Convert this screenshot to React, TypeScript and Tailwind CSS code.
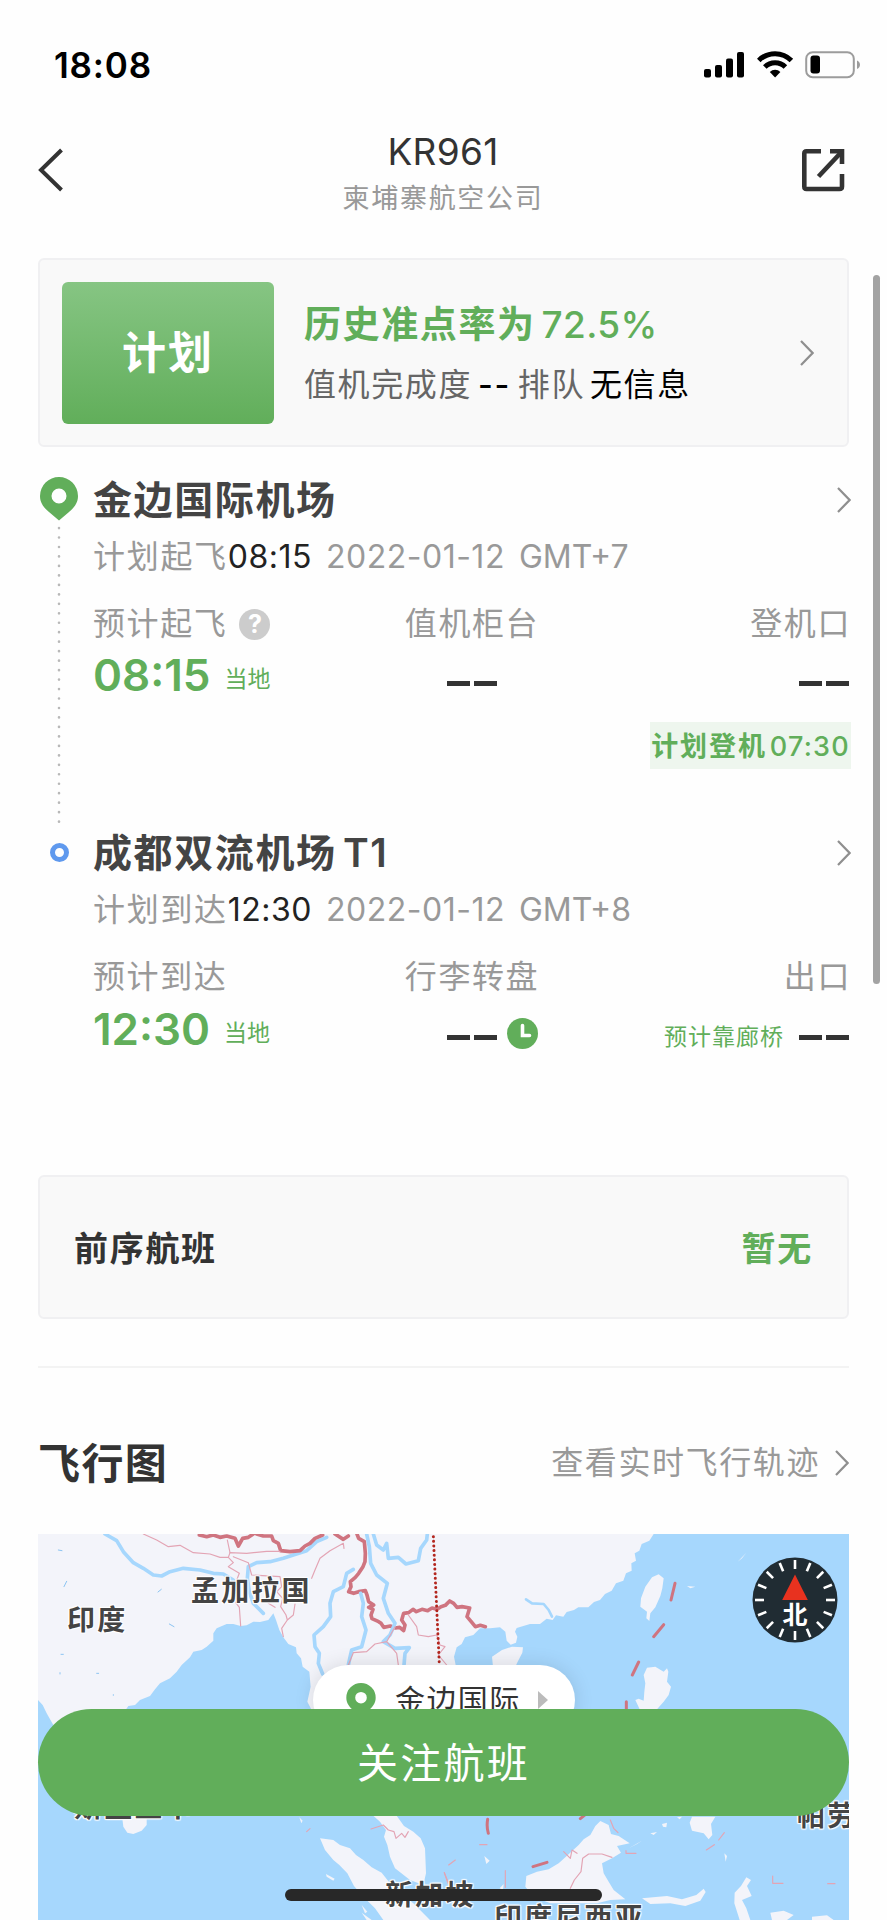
import React from 'react';

interface StopColumn {
  label: string;
  note?: string;
  clock?: boolean;
}

interface Stop {
  name: string;
  planLabel: string;
  planTime: string;
  planDate: string;
  zone: string;
  estimateLabel: string;
  estimateTime: string;
  help?: boolean;
  middle: StopColumn;
  right: StopColumn;
}

const departure: Stop = {
  name: '金边国际机场',
  planLabel: '计划起飞',
  planTime: '08:15',
  planDate: '2022-01-12',
  zone: 'GMT+7',
  estimateLabel: '预计起飞',
  estimateTime: '08:15',
  help: true,
  middle: { label: '值机柜台' },
  right: { label: '登机口' },
};

const arrival: Stop = {
  name: '成都双流机场 T1',
  planLabel: '计划到达',
  planTime: '12:30',
  planDate: '2022-01-12',
  zone: 'GMT+8',
  estimateLabel: '预计到达',
  estimateTime: '12:30',
  middle: { label: '行李转盘', clock: true },
  right: { label: '出口', note: '预计靠廊桥' },
};

const Chevron = ({ className = '' }: { className?: string }) => (
  <svg viewBox="0 0 14 26" className={`h-[26px] w-[14px] shrink-0 ${className}`} fill="none" stroke="#8f8f8f" strokeWidth="2.2">
    <path d="M1 1 L12.6 13 L1 25" />
  </svg>
);

const PinIcon = ({ className = '' }: { className?: string }) => (
  <svg viewBox="0 0 38 44" className={className}>
    <path fillRule="evenodd" fill="#61ae5a" d="M19 0a19 19 0 0 1 19 19c0 7-4 12-9 16l-10 8.500-10-8.500C4 31 0 26 0 19A19 19 0 0 1 19 0Zm0 11.500a7.500 7.500 0 1 0 0 15 7.500 7.500 0 0 0 0-15Z" />
  </svg>
);

const Dashes = () => (
  <span className="flex shrink-0 gap-1">
    <i className="h-[5px] w-[23px] bg-[#333]" />
    <i className="h-[5px] w-[23px] bg-[#333]" />
  </span>
);

function StatusBar() {
  return (
    <div className="flex h-[130px] items-center justify-between pr-[26px] pl-[54px] text-black">
      <span className="text-[35px] leading-none font-semibold tracking-[0.8px]">18:08</span>
      <svg viewBox="0 0 158 28" className="h-7 w-[158px]">
        <g>
          <rect x="1" y="18" width="7" height="8.500" rx="2" />
          <rect x="12" y="14" width="7" height="12.500" rx="2" />
          <rect x="23" y="7.500" width="7" height="19" rx="2" />
          <rect x="34" y="1" width="7" height="25.500" rx="2" />
        </g>
        <g fill="none" stroke="#000" strokeWidth="5">
          <path d="M55.800 9.400a23 23 0 0 1 32.600 0" />
          <path d="M61.800 16a14.500 14.500 0 0 1 20.600 0" />
        </g>
        <path d="M66.800 21a7.600 7.600 0 0 1 10.600 0L72.100 26.500Z" />
        <rect x="103.200" y="1.200" width="47.600" height="25" rx="6.500" fill="none" stroke="#9c9c9c" strokeWidth="2" />
        <rect x="107.500" y="4.500" width="9.500" height="18" rx="3" />
        <path d="M154 9.500c4 1.500 4 7 0 8.500Z" fill="#9c9c9c" />
      </svg>
    </div>
  );
}

function Header() {
  return (
    <header className="flex h-[128px] justify-between px-[38px]">
      <svg viewBox="0 0 26 44" className="mt-[18px] h-11 w-[26px]" fill="none" stroke="#333" strokeWidth="4">
        <path d="M23.500 2 L3 22 L23.500 42" />
      </svg>
      <div className="flex flex-col items-center pt-[3px] pl-[21px]">
        <h1 className="text-[37px] leading-[38px] tracking-[0.3px] text-[#333]">KR961</h1>
        <p className="mt-[13px] text-[27px] leading-[30px] tracking-[1.7px] text-[#999]">柬埔寨航空公司</p>
      </div>
      <svg viewBox="0 0 44 44" className="mt-[18px] mr-[4px] h-11 w-11" fill="none" stroke="#333" strokeWidth="4.6">
        <path d="M20 3.300H5.500Q3.300 3.300 3.300 5.500V38.500Q3.300 41 5.500 41H38.500Q41 41 41 38.500V26" />
        <path d="M29 3.300H41V16" />
        <path d="M17.500 28.500 L40 4.500" />
      </svg>
    </header>
  );
}

function SummaryCard() {
  return (
    <section className="flex h-[189px] items-center rounded-md border-2 border-[#f0f0f2] bg-[#f9f9f9] pr-[33px] pl-[22px]">
      <div className="flex h-[142px] w-[212px] items-center justify-center rounded-md bg-linear-to-b from-[#86c583] to-[#61ae5a] text-[44px] font-semibold tracking-[2px] text-white">
        计划
      </div>
      <div className="ml-[30px] flex-1 pt-[3px]">
        <p className="flex h-[50px] items-center gap-[6px] text-[37px] font-semibold text-[#61ae5a]">
          <span className="tracking-[1.6px]">历史准点率为</span>
          <span className="font-medium tracking-[0.3px]">72.5%</span>
        </p>
        <p className="mt-[12px] flex h-[46px] items-center text-[32px] tracking-[1.6px] text-[#666]">
          值机完成度
          <span className="ml-[6px] font-medium text-black">--</span>
          <span className="ml-[7px]">排队</span>
          <span className="ml-[5px] text-black">无信息</span>
        </p>
      </div>
      <Chevron />
    </section>
  );
}

function StopInfo({ stop }: { stop: Stop }) {
  return (
    <div className="flex-1 pt-px">
      <div className="flex h-[50px] items-center justify-between">
        <h2 className="text-[39px] font-semibold tracking-[1.6px] text-[#444] [word-spacing:-5px]">{stop.name}</h2>
        <Chevron className="-mr-[2px]" />
      </div>
      <p className="mt-[9px] flex h-[46px] items-center text-[32px] text-[#999]">
        <span className="tracking-[1.7px]">{stop.planLabel}</span>
        <span className="tracking-[0.5px] text-[#222]">{stop.planTime}</span>
        <span className="ml-[14px] tracking-[0.5px]">{stop.planDate}</span>
        <span className="ml-[14px]">{stop.zone}</span>
      </p>
      <div className="mt-5 grid h-[46px] grid-cols-3 items-center text-[32px] tracking-[1.6px] text-[#999]">
        <span className="flex items-center gap-[12px]">
          {stop.estimateLabel}
          {stop.help && (
            <i className="flex size-[31px] items-center justify-center rounded-full bg-[#ccc] text-[25px] leading-none font-bold tracking-normal text-white not-italic">?</i>
          )}
        </span>
        <span className="pl-[2px] text-center">{stop.middle.label}</span>
        <span className="-mr-[2px] text-right">{stop.right.label}</span>
      </div>
      <div className="mt-[4px] grid h-[50px] grid-cols-3 text-[#61ae5a]">
        <div className="flex items-center gap-[14px]">
          <span className="text-[44px] leading-[50px] font-semibold">{stop.estimateTime}</span>
          <span className="pt-[9px] text-[23px]">当地</span>
        </div>
        <div className="flex items-center justify-start gap-[10px] pt-[17px] pl-[102px]">
          <Dashes />
          {stop.middle.clock && (
            <svg viewBox="0 0 31 31" className="-mt-[8px] size-[31px]">
              <circle cx="15.500" cy="15.500" r="15.500" fill="#61ae5a" />
              <path d="M15.500 7.500V17.500H22.500" fill="none" stroke="#fff" strokeWidth="3.600" strokeLinecap="round" />
            </svg>
          )}
        </div>
        <div className="flex items-center justify-end gap-[15px] pt-[17px]">
          {stop.right.note && <span className="text-[23px] tracking-[1px] whitespace-nowrap">{stop.right.note}</span>}
          <Dashes />
        </div>
      </div>
    </div>
  );
}

const TICKS = Array.from({ length: 16 }, (_, i) => i * 22.5);

function Compass() {
  return (
    <div className="absolute top-[23px] left-[714px] size-[86px]">
      <svg viewBox="-43 -43 86 86" className="size-full">
        <circle r="42.500" fill="#202c33" />
        {TICKS.map((a) => (
          <path key={a} d="M0 -40V-31" stroke="#fff" strokeWidth="2.600" transform={`rotate(${a})`} />
        ))}
        <path d="M0 -25.500L12.800 0H-12.800Z" fill="#e8321f" />
      </svg>
      <span className="absolute inset-x-0 top-[44px] text-center text-[25px] leading-[28px] font-semibold text-white">北</span>
    </div>
  );
}

function MapDrawing() {
  return (
    <svg viewBox="114 42 2433 1158" className="h-[386px] w-[811px]" fill="none" strokeLinejoin="round" strokeLinecap="round">
      <rect x="114" y="42" width="2433" height="1158" fill="#a6d7fd" />
      {/* mainland */}
      <path
        fill="#f3f4fa"
        d="M114 42H1961L1948 62 1925 72 1918 92 1904 100 1908 122 1894 130 1895 152 1878 160 1870 182 1848 190 1835 212 1815 222 1800 240 1782 246 1765 262 1735 262 1722 270 1700 276 1690 290 1668 286 1658 300 1640 296 1620 312 1590 312 1550 324 1545 335 1552 350 1548 368 1532 374 1520 362 1516 335 1500 322 1470 325 1440 325 1420 345 1395 352 1385 372 1370 382 1362 410 1370 450 1420 600 1370 700 1200 700 1190 887 1212 918 1240 935 1262 955 1275 985 1278 1060 1270 1095 1230 1080 1185 1045 1170 1010 1162 975 1152 950 1158 930 1140 905 1120 887 1080 780 960 700 940 580 922 545 932 500 928 455 908 440 903 415 890 400 888 382 865 372 850 352 838 330 828 300 820 280 805 300 780 306 760 305 740 316 722 318 700 312 680 312 650 325 640 340 640 362 620 380 605 390 580 395 570 412 545 435 530 455 510 475 480 490 465 508 450 528 420 540 405 555 385 558 370 580 300 700 230 780 160 615 140 580 128 555 114 540Z"
      />
      <path fill="#f3f4fa" d="M365 880H440L440 915 425 932 400 942 382 938 370 920Z" />
      <path fill="#f3f4fa" d="M960 955L1000 960 1020 975 1050 985 1068 1005 1090 1020 1115 1042 1145 1058 1170 1090 1200 1120 1240 1150 1290 1200H1150L1125 1165 1090 1130 1062 1098 1042 1060 1018 1035 1000 1020 975 990Z" />
      <path fill="#f3f4fa" d="M978 1062L1004 1076 1000 1082 980 1070ZM1050 1112L1068 1135 1060 1142ZM1085 1155L1102 1175 1095 1180ZM898 892L908 902 904 910ZM1085 1178L1115 1200H1100Z" />
      {/* eastern half */}
      <g transform="translate(1311 0)">
        <g fill="#f3f4fa">
          <path d="M665 163L680 175 676 205 670 228 655 262 640 280 637 303 628 295 630 275 610 260 612 235 625 200 645 172Z" />
          <path d="M225 380L258 382 256 398 242 425 235 440H168L165 410 195 390Z" />
          <path d="M630 443L655 440 680 455 690 445 694 455 690 485 702 500 695 525 680 545 660 568H608L595 540 605 536 620 542 622 515 625 490 620 465Z" />
          <path d="M490 903L515 915 522 942 545 948 578 970 540 978 552 998 525 1015 495 1030 500 1060 515 1085 530 1110 565 1138 520 1140 480 1150H340L290 1130 265 1100 268 1068 300 1055 335 1048 365 1030 385 1012 425 975 440 958 460 945 475 918Z" />
          <path d="M765 890H835L822 912 826 945 815 958 800 940 765 932 758 908Z" />
          <path d="M615 1135L690 1128 735 1138 778 1125 800 1106 806 1116 790 1142 745 1158 700 1150 640 1152Z" />
          <path d="M928 1072L942 1080 930 1098 944 1128 915 1140 928 1165 940 1200H908L892 1150 893 1118 912 1098Z" />
          <path d="M1000 1178L1040 1172 1070 1185 1050 1200H1005ZM1125 1190L1170 1186 1190 1200H1125ZM862 1000L870 1008 866 1025ZM640 940L660 936 650 945ZM675 912L690 908 688 922 678 920ZM142 1008L158 1022 148 1032ZM902 125L928 98 915 115ZM575 985L615 962 600 972ZM188 1105L200 1092 198 1110ZM750 198L775 200 760 205ZM945 55L955 45ZM812 1030L822 1038ZM720 892L735 890 728 898Z" />
        </g>
        {/* borders and maritime boundary dashes */}
        <g stroke="#cf7480">
          <path d="M714 190L702 240M680 314L650 350M605 426L586 465M568 545V580M152 898Q148 920 154 940M288 1040L330 1027M430 896L445 884" strokeWidth="9" />
          <path d="M145 320L130 316 115 320 102 304 90 290 98 264 75 260 60 262 50 250 38 243 25 256 12 260 0 268-15 264-28 272-45 268-62 275-72 268-85 278-100 280-106 300-96 315-100 332-112 322-125 324-140 318-160 322-168 310-175 305-195 296-198 285-192 268-205 262-190 255-205 245-210 225-215 212-235 215-250 220-265 215-258 200-260 185-245 172-235 160-222 140-216 125-215 100-218 65-235 55-240 42" strokeWidth="11" />
        </g>
        <g stroke="#e3a4b4" strokeWidth="3.500">
          <path d="M400 1105L412 1080 432 1055 437 1015 455 1002 495 1002 525 1012M380 995L400 1015 405 990 420 1000M520 900L530 925 543 938M567 992V1000H597M808 990L832 974M845 960L862 938M1007 1068V1090H1038M1172 1091H1194M205 1052V1102M128 974H150M35 1035L55 1020M22 1058L34 1088" />
        </g>
        <path d="M267 238L285 250 320 252 335 270 345 290" stroke="#a6d7fd" strokeWidth="8" />
      </g>
      <g stroke="#a6d7fd" strokeWidth="11">
        <path d="M315 42L350 62 370 95 400 128 430 145 460 165 485 168 510 155 550 145 600 150 640 160 670 162 700 180" />
        <path d="M980 52L950 65 920 92 880 105 850 115 810 125 770 128 745 140 742 175 748 215 760 250 790 280" />
        <path d="M1060 148L1040 160 1030 200 1000 215 990 250 992 290 970 320 942 345 945 380 958 400 955 430 968 462" />
        <path d="M1082 220L1090 250 1085 290 1098 330 1085 380 1055 390 1045 435" />
        <path d="M1100 42L1108 80 1112 130 1130 165 1162 190 1150 235 1165 280 1185 310 1170 345 1150 365 1185 385 1228 383 1215 400 1212 435" />
        <path d="M1120 42L1130 75 1150 90 1160 70 1165 115 1195 112 1218 132 1255 122 1262 85 1280 60 1282 42" />
      </g>
      <path d="M598 45L620 50 640 45 660 52 680 48 705 55 715 78 728 55 745 52 760 42M770 42L790 48 815 48 820 62 835 70 842 92 870 95 900 92 915 78 930 70 945 55 968 45M1005 42L1030 58 1045 48" stroke="#cf7480" strokeWidth="11" />
      <g stroke="#e3a4b4" strokeWidth="3.500">
        <path d="M430 42L470 60 505 80 540 76 580 98 630 102 660 112 685 112 690 98 740 100 800 94 840 94" />
        <path d="M690 98L682 60M685 112L700 128 685 140 718 160 708 185 712 220 705 245 718 262 722 318M700 110L745 128 755 165 840 170 845 200 830 215 848 235 842 260 858 285 862 300 845 325 850 350M862 300L880 285 885 252M805 250L825 262M935 175L945 150 960 115 990 92 1030 70 1032 85" />
        <path d="M1045 435L1060 398 1100 395 1125 372 1160 365 1190 400 1195 435M1160 365L1185 320M1225 285L1250 320 1255 345 1285 350 1310 345 1320 375 1335 380 1315 405 1340 435" />
        <path d="M1113 927L1150 915 1165 930 1182 935 1188 955 1205 940 1215 952 1225 935M920 935L930 926M1333 1058L1344 1090" />
      </g>
      <path d="M175 90L186 92M192 200L200 184M474 216L484 208M508 312L522 320M183 403H190M340 524V526M290 460H296M180 458V462" stroke="#8cc4f2" strokeWidth="3" />
      {/* flight route */}
      <path d="M1300 50L1318 435" stroke="#b3261e" strokeWidth="9" strokeDasharray="0.100 13.800" />
    </svg>
  );
}

function FlightMap() {
  const label =
    'absolute whitespace-nowrap text-[28px] leading-[34px] tracking-[2.2px] font-semibold text-[#444] [text-shadow:0_0_2px_#fff,1px_1px_1px_#fff,-1px_-1px_1px_#fff,1px_-1px_1px_#fff,-1px_1px_1px_#fff]';
  return (
    <div className="relative h-[386px] overflow-hidden">
      <MapDrawing />
      <span className={`${label} top-[40px] left-[153px]`}>孟加拉国</span>
      <span className={`${label} top-[69px] left-[29px]`}>印度</span>
      <span className={`${label} top-[256px] left-[36px]`}>斯里兰卡</span>
      <span className={`${label} top-[265px] left-[759px]`}>帕劳</span>
      <span className={`${label} top-[344px] left-[347px]`}>新加坡</span>
      <span className={`${label} top-[367px] left-[456px]`}>印度尼西亚</span>
      <div className="absolute top-[131px] left-[275px] flex h-[70px] w-[262px] items-center rounded-full bg-white pl-[33px] shadow-[0_0_20px_rgba(0,0,0,0.12)]">
        <PinIcon className="-mt-px h-[34px] w-[30px]" />
        <span className="ml-[19px] text-[30px] tracking-[1.4px] text-[#333]">金边国际</span>
        <svg viewBox="0 0 10 18" className="ml-[17px] h-[18px] w-[10px]">
          <path d="M0 0L10 9L0 18Z" fill="#bbb" />
        </svg>
      </div>
      <Compass />
    </div>
  );
}

export default function App() {
  return (
    <main className="relative h-[1920px] w-[887px] overflow-hidden bg-[#fefefe] font-[Inter,'Noto_Sans_CJK_SC',sans-serif]">
      <StatusBar />
      <Header />
      <div className="px-[38px]">
        <SummaryCard />

        <div className="mt-[27px] flex h-[353px]">
          <div className="flex w-[55px] flex-col items-start pl-[2px]">
            <PinIcon className="mt-[3px] h-[44px] w-[38px]" />
            <svg viewBox="0 0 4 300" className="mt-[5px] ml-[17px] h-[300px] w-1">
              <path d="M2 2V298" stroke="#b8b8b8" strokeWidth="2.600" strokeLinecap="round" strokeDasharray="0.100 9.370" />
            </svg>
          </div>
          <div className="flex flex-1 flex-col">
            <div className="flex">
              <StopInfo stop={departure} />
            </div>
            <div className="mt-[22px] -mr-[2px] flex h-[47px] w-[201px] items-center justify-center gap-[3px] self-end bg-[#eef6ee] pt-[3px] text-[27px] font-semibold whitespace-nowrap text-[#61ae5a]">
              <span className="tracking-[1.9px]">计划登机</span>
              <span className="font-medium tracking-[1.2px]">07:30</span>
            </div>
          </div>
        </div>

        <div className="flex h-[348px]">
          <div className="w-[55px] pl-[12px]">
            <div className="mt-[16px] size-[19px] rounded-full border-[5px] border-[#5f99ee]" />
          </div>
          <StopInfo stop={arrival} />
        </div>

        <section className="flex h-[144px] items-center justify-between rounded-md border-2 border-[#f0f0f2] bg-[#f9f9f9] pt-[2px] pr-[34px] pl-[34px] text-[34px] font-semibold tracking-[1.7px]">
          <span className="text-[#333]">前序航班</span>
          <span className="text-[#61ae5a]">暂无</span>
        </section>

        <hr className="mt-[47px] border-t-2 border-[#f3f3f3]" />

        <div className="flex h-[166px] items-center justify-between pt-[24px]">
          <h2 className="text-[42px] font-semibold tracking-[1.4px] text-[#333]">飞行图</h2>
          <span className="flex items-center gap-[15px] text-[32px] tracking-[1.6px] text-[#999]">
            查看实时飞行轨迹
            <Chevron />
          </span>
        </div>

        <FlightMap />
      </div>

      {/* floating controls */}
      <button className="absolute top-[1709px] left-[38px] h-[107px] w-[811px] rounded-full bg-[#61ae5a] pt-[3px] text-[41px] tracking-[2.2px] text-white">
        关注航班
      </button>
      <div className="absolute top-[1889px] left-[285px] h-3 w-[317px] rounded-full bg-[#282828]" />
      <div className="absolute top-[275px] left-[873px] h-[709px] w-[7px] rounded-full bg-[#a3a3a3]" />
    </main>
  );
}
